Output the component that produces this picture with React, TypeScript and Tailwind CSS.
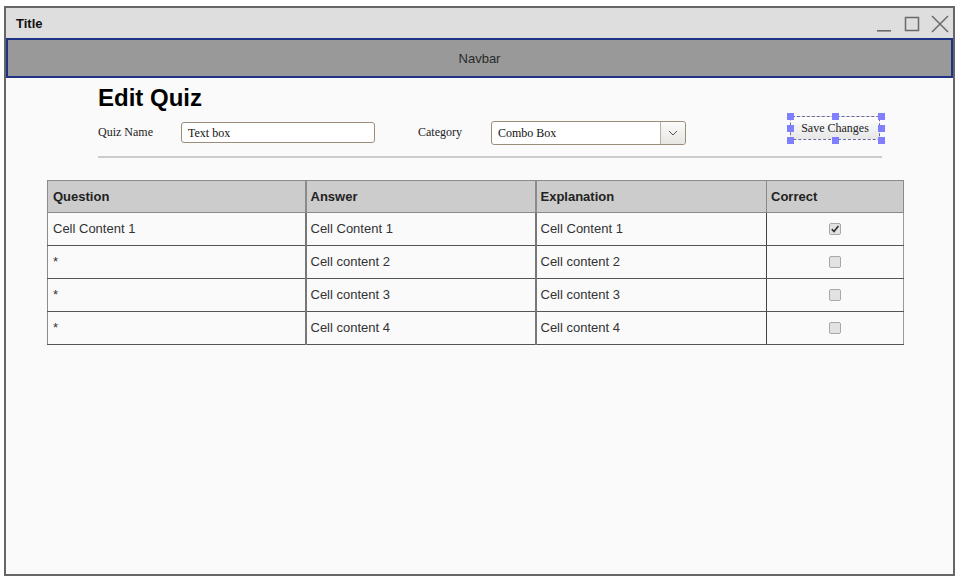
import React from "react";

const rows = [
  { q: "Cell Content 1", a: "Cell Content 1", e: "Cell Content 1", c: true },
  { q: "*", a: "Cell content 2", e: "Cell content 2", c: false },
  { q: "*", a: "Cell content 3", e: "Cell content 3", c: false },
  { q: "*", a: "Cell content 4", e: "Cell content 4", c: false },
];

function Checkbox({ checked }: { checked: boolean }) {
  return (
    <div className="w-[12px] h-[12px] rounded-[2px] border border-[#a8a8a8] bg-[#e2e2e2] flex items-center justify-center">
      {checked && (
        <svg width="10" height="10" viewBox="0 0 10 10">
          <path d="M1.8 5.2 L4 7.5 L8.4 2" stroke="#333" strokeWidth="1.7" fill="none" />
        </svg>
      )}
    </div>
  );
}

function Handle({ cls }: { cls: string }) {
  return <div className={"absolute w-[7px] h-[7px] bg-[#7f7fff] " + cls} />;
}

export default function App() {
  const sans = { fontFamily: '"Liberation Sans", Arial, sans-serif' };
  const serif = { fontFamily: '"Liberation Serif", "Times New Roman", serif' };
  return (
    <div className="w-[959px] h-[580px] bg-white pt-[6px] pl-[4px]" style={sans}>
      <div className="w-[951px] h-[570px] border-2 border-[#666666] bg-[#fafafa] flex flex-col">
        {/* Title bar */}
        <div className="h-[30px] bg-[#dedede] flex items-center justify-between pl-[10px] pr-[4px]">
          <span className="text-[13px] font-bold text-[#111] leading-none mt-[1px]">Title</span>
          <div className="flex items-center mt-[1px]">
            <svg width="16" height="16" viewBox="0 0 16 16" className="mr-[12px]">
              <rect x="1" y="14" width="14" height="1.6" fill="#6a6a6a" />
            </svg>
            <svg width="16" height="16" viewBox="0 0 16 16" className="mr-[11px]">
              <rect x="1.5" y="1.5" width="13" height="13" stroke="#6a6a6a" strokeWidth="1.5" fill="none" />
            </svg>
            <svg width="18" height="18" viewBox="0 0 18 18">
              <path d="M1 1 L17 17 M17 1 L1 17" stroke="#6a6a6a" strokeWidth="1.5" />
            </svg>
          </div>
        </div>
        {/* Navbar */}
        <div className="h-[40px] bg-[#999999] border-2 border-[#1f3283] flex items-center justify-center">
          <span className="text-[13px] text-[#2a2a2a] mt-[1px]">Navbar</span>
        </div>
        {/* Content */}
        <div className="flex-1">
          <div className="ml-[92px] w-[784px]">
            <div className="mt-[8px] h-[24px] leading-[24px] text-[24px] font-bold text-black">Edit Quiz</div>
            <div className="h-[36px] flex items-start" style={serif}>
              <span className="mt-[15px] text-[12px] leading-[14px] text-[#222] w-[83px]">Quiz Name</span>
              <div className="mt-[12px] w-[194px] h-[21px] border border-[#9c8c7a] rounded-[3px] bg-white flex items-center pl-[6px] text-[12px] text-[#111]">
                Text box
              </div>
              <span className="mt-[15px] ml-[43px] text-[12px] leading-[14px] text-[#222] w-[73px]">Category</span>
              <div className="mt-[11px] w-[195px] h-[24px] border border-[#9c8c7a] rounded-[3px] bg-white flex items-stretch text-[12px] text-[#111]">
                <div className="flex-1 flex items-center pl-[6px]">Combo Box</div>
                <div className="w-[25px] border-l border-[#b8aea2] bg-gradient-to-b from-[#fafafa] to-[#e8e6e2] rounded-r-[3px] flex items-center justify-center">
                  <svg width="10" height="6" viewBox="0 0 10 6">
                    <path d="M1 1 L5 5 L9 1" stroke="#555" strokeWidth="1" fill="none" />
                  </svg>
                </div>
              </div>
              <div className="relative mt-[6px] ml-[104px] w-[90px] h-[24px]">
                <div className="w-full h-full border border-dashed border-[#6a6a9a] rounded-[2px] bg-gradient-to-b from-white to-[#e6e6e6] flex items-center justify-center text-[12px] text-[#222]">
                  Save Changes
                </div>
                <Handle cls="-left-[3px] -top-[3px]" />
                <Handle cls="left-[42px] -top-[3px]" />
                <Handle cls="-right-[5px] -top-[3px]" />
                <Handle cls="-left-[3px] top-[9px]" />
                <Handle cls="-right-[5px] top-[9px]" />
                <Handle cls="-left-[3px] -bottom-[4px]" />
                <Handle cls="left-[42px] -bottom-[4px]" />
                <Handle cls="-right-[5px] -bottom-[4px]" />
              </div>
            </div>
            <div className="mt-[10px] h-[2px] bg-[#cccccc]" />
          </div>
          {/* Table */}
          <table className="ml-[41px] mt-[22px] border-collapse w-[856px] text-[13px] text-[#333] table-fixed">
            <colgroup>
              <col className="w-[258px]" />
              <col className="w-[230px]" />
              <col className="w-[231px]" />
              <col className="w-[137px]" />
            </colgroup>
            <thead>
              <tr className="h-[32px] bg-[#cccccc]">
                <th className="border border-[#8a8a8a] text-left font-bold pl-[5px] text-[#222]">Question</th>
                <th className="border border-[#8a8a8a] border-l-2 text-left font-bold pl-[4px] text-[#222]">Answer</th>
                <th className="border border-[#8a8a8a] border-l-2 text-left font-bold pl-[4px] text-[#222]">Explanation</th>
                <th className="border border-[#8a8a8a] text-left font-bold pl-[4px] text-[#222]">Correct</th>
              </tr>
            </thead>
            <tbody>
              {rows.map((r, i) => (
                <tr key={i} className="h-[33px]">
                  <td className="border-x border-[#8a8a8a] border-b border-b-[#555] pl-[5px]">{r.q}</td>
                  <td className="border-l-2 border-l-[#777] border-b border-b-[#555] pl-[4px]">{r.a}</td>
                  <td className="border-l-2 border-l-[#777] border-b border-b-[#555] pl-[4px]">{r.e}</td>
                  <td className="border-l border-l-[#444] border-r border-r-[#999] border-b border-b-[#555]">
                    <div className="flex justify-center">
                      <Checkbox checked={r.c} />
                    </div>
                  </td>
                </tr>
              ))}
            </tbody>
          </table>
        </div>
      </div>
    </div>
  );
}
